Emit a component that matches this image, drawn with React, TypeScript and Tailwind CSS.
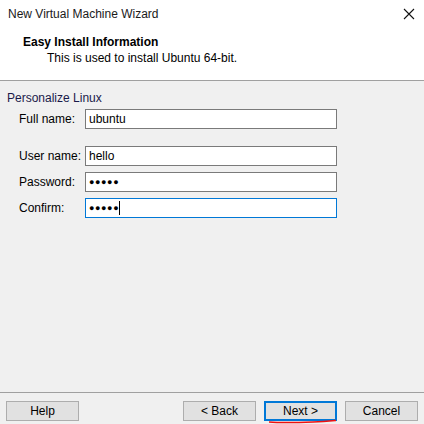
import React from "react";

function Field({ label, value, dots, focused }: { label: string; value?: string; dots?: boolean; focused?: boolean }) {
  return (
    <div className="flex items-center h-[20px]">
      <div className="w-[78px] shrink-0 pl-[12px] whitespace-nowrap text-[12px] text-black">{label}</div>
      <div
        className={
          "w-[252px] h-[20px] bg-white flex items-center pl-[3px] " +
          (focused ? "border border-[#0078d7]" : "border border-[#7a7a7a]")
        }
      >
        {dots ? (
          <span className="flex items-center">
            <span className="text-[9px] tracking-[0.6px] leading-none text-black">●●●●●</span>
            {focused && <span className="w-px h-[14px] bg-black" />}
          </span>
        ) : (
          <span className="text-[12px] text-black leading-none">{value}</span>
        )}
      </div>
    </div>
  );
}

function Btn({ label, primary }: { label: string; primary?: boolean }) {
  return (
    <div
      className={
        "w-[73px] h-[20px] bg-[#e1e1e1] flex items-center justify-center text-[12px] text-black " +
        (primary ? "border-2 border-[#0078d7]" : "border border-[#adadad]")
      }
    >
      {label}
    </div>
  );
}

export default function App() {
  return (
    <div
      className="w-[424px] h-[424px] flex flex-col bg-[#f0f0f0] overflow-hidden relative"
      style={{ fontFamily: '"Liberation Sans", Arial, sans-serif' }}
    >
      <div className="h-[80px] bg-white flex flex-col">
        <div className="h-[28px] flex items-center justify-between pl-[8px] pr-[9px]">
          <span className="text-[12px] text-[#1a1a1a]">New Virtual Machine Wizard</span>
          <svg width="12" height="12" viewBox="0 0 12 12">
            <path d="M1 1 L11 11 M11 1 L1 11" stroke="#111" strokeWidth="1.1" />
          </svg>
        </div>
        <div className="pl-[23px] pt-[7px] text-[12px] font-bold text-black leading-[14px]">Easy Install Information</div>
        <div className="pl-[47px] pt-[2px] text-[12px] text-black leading-[14px]">This is used to install Ubuntu 64-bit.</div>
      </div>
      <div className="h-px bg-[#a0a0a0]" />
      <div className="flex-1 flex flex-col">
        <div className="pl-[7px] pt-[10px] text-[12px] text-[#1a1a4a] leading-[14px]">Personalize Linux</div>
        <div className="pl-[7px] pt-[4px] flex flex-col">
          <Field label="Full name:" value="ubuntu" />
          <div className="h-[17px]" />
          <Field label="User name:" value="hello" />
          <div className="h-[6px]" />
          <Field label="Password:" dots />
          <div className="h-[6px]" />
          <Field label="Confirm:" dots focused />
        </div>
      </div>
      <div className="h-px bg-[#a0a0a0]" />
      <div className="h-[31px] flex items-start pt-[8px] pl-[6px]">
        <Btn label="Help" />
        <div className="w-[104px]" />
        <Btn label="< Back" />
        <div className="w-[8px]" />
        <Btn label="Next >" primary />
        <div className="w-[8px]" />
        <Btn label="Cancel" />
      </div>
      <svg className="absolute left-[268px] top-[418px]" width="70" height="6" viewBox="0 0 70 6">
        <path d="M1 4 C 15 5, 30 4.5, 45 4 C 55 3.6, 62 3, 68 2.5" stroke="#e11" strokeWidth="1.5" fill="none" />
      </svg>
    </div>
  );
}
